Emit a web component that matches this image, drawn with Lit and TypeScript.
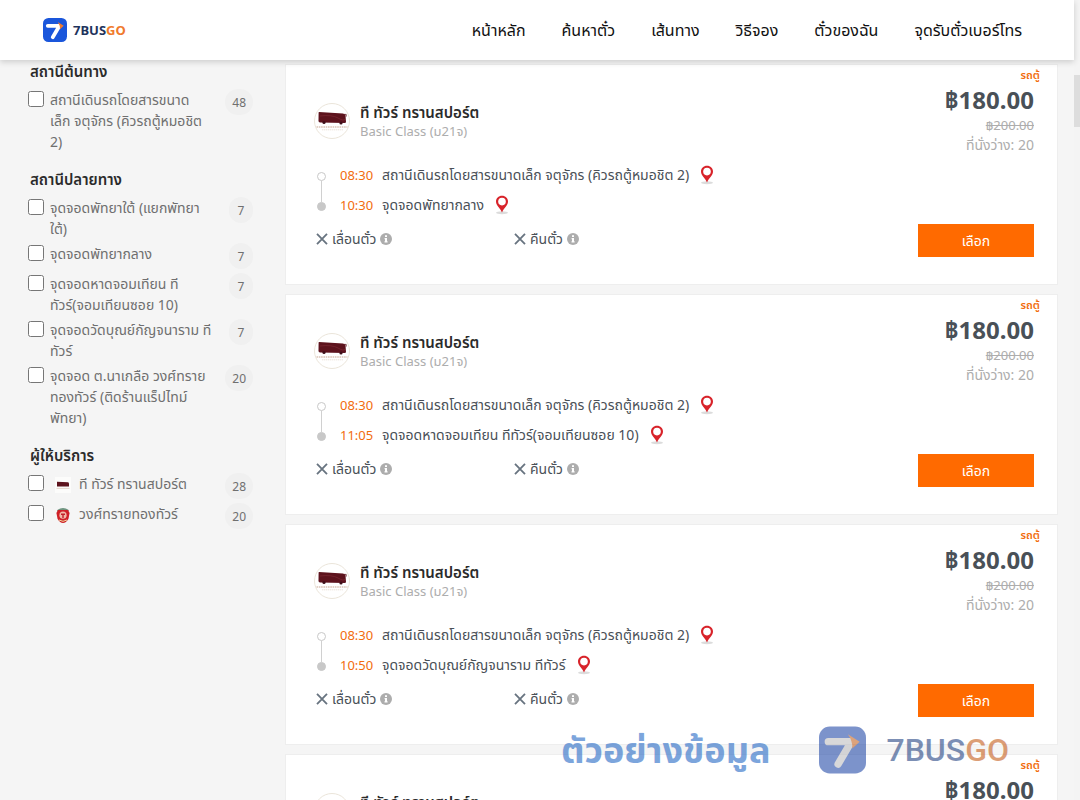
import { LitElement, html, css, svg, nothing } from "lit";
import { customElement, property } from "lit/decorators.js";

interface Option {
  label: string;
  count: number;
  logo?: "bus" | "crest";
}
interface Group {
  title: string;
  options: Option[];
}
interface Trip {
  depart: string;
  arrive: string;
  to: string;
}

const NAV = ["หน้าหลัก", "ค้นหาตั๋ว", "เส้นทาง", "วิธีจอง", "ตั๋วของฉัน", "จุดรับตั๋วเบอร์โทร"];

const GROUPS: Group[] = [
  {
    title: "สถานีต้นทาง",
    options: [{ label: "สถานีเดินรถโดยสารขนาด\nเล็ก จตุจักร (คิวรถตู้หมอชิต\n2)", count: 48 }],
  },
  {
    title: "สถานีปลายทาง",
    options: [
      { label: "จุดจอดพัทยาใต้ (แยกพัทยา\nใต้)", count: 7 },
      { label: "จุดจอดพัทยากลาง", count: 7 },
      { label: "จุดจอดหาดจอมเทียน ที\nทัวร์(จอมเทียนซอย 10)", count: 7 },
      { label: "จุดจอดวัดบุณย์กัญจนาราม ที\nทัวร์", count: 7 },
      { label: "จุดจอด ต.นาเกลือ วงศ์ทราย\nทองทัวร์ (ติดร้านแร็ปไทม์\nพัทยา)", count: 20 },
    ],
  },
  {
    title: "ผู้ให้บริการ",
    options: [
      { label: "ที ทัวร์ ทรานสปอร์ต", count: 28, logo: "bus" },
      { label: "วงศ์ทรายทองทัวร์", count: 20, logo: "crest" },
    ],
  },
];

const TRIPS: Trip[] = [
  { depart: "08:30", arrive: "10:30", to: "จุดจอดพัทยากลาง" },
  { depart: "08:30", arrive: "11:05", to: "จุดจอดหาดจอมเทียน ทีทัวร์(จอมเทียนซอย 10)" },
  { depart: "08:30", arrive: "10:50", to: "จุดจอดวัดบุณย์กัญจนาราม ทีทัวร์" },
  { depart: "08:30", arrive: "10:30", to: "จุดจอดพัทยากลาง" },
];

const busShape = svg`
  <path d="M5 13 L29 14.5 Q31 14.8 31.5 16.5 L32 23 Q32 24 30.5 24 L6 23.4 Q4.5 23.2 4.5 22 L4.6 14 Q4.6 13 5 13Z" fill="#5d131d"/>
  <path d="M6 17 Q18 15.5 24 19 T31 20" fill="none" stroke="#7d2a34" stroke-width=".7"/>
  <path d="M30 15.4h2.2v2.2" fill="none" stroke="#5d131d" stroke-width=".8"/>
  <circle cx="10" cy="23.5" r="1.6" fill="#40101a"/>
  <circle cx="27" cy="24" r="1.6" fill="#40101a"/>
  <path d="M2.5 28h31" stroke="#dcc4b6" stroke-width="1.4" stroke-dasharray="1.6 .7"/>
  <path d="M8 30.8h21" stroke="#ece2d6" stroke-width="1" stroke-dasharray="1.4 .6"/>`;

const operatorLogo = html`<svg class="avatar" viewBox="0 0 36 38" aria-hidden="true">
  <circle cx="18" cy="19" r="17.500" fill="#fff" stroke="#ebe5da" stroke-width="1"/>
  <g transform="translate(0 -3)">${busShape}</g>
</svg>`;

const smallBus = html`<svg class="mini" viewBox="0 0 16 16" aria-hidden="true">
  <rect width="16" height="16" fill="#fcfcfb"/>
  <path d="M2 4.8 13 5.2Q14 5.4 14 7V9.5H2Z" fill="#5d131d"/>
  <path d="M1.5 11.4h13" stroke="#e6d6cb" stroke-width="1"/>
</svg>`;

const smallCrest = html`<svg class="mini" viewBox="0 0 16 16" aria-hidden="true">
  <path d="M2 3.2Q8-1.4 14 3.2L13 5H3Z" fill="#6f9480"/>
  <path d="M3 3h10l1.6 3-1.2 6Q11 15.8 8 16 5 15.8 2.6 12L1.4 6Z" fill="#cf2027"/>
  <circle cx="8" cy="8.2" r="3.6" fill="#f2b9a8"/>
  <path d="M6 6.500h4v1.400H6zM7.300 8h1.400v3H7.300z" fill="#c2222b"/>
  <path d="M4 13q4 2.600 8 0" fill="none" stroke="#f0d9a0" stroke-width="1"/>
</svg>`;

const mark = (cls: string, tile: string, digit: string, tip: string) => html`<svg class=${cls} viewBox="0 0 48 48" aria-hidden="true">
  <rect width="48" height="48" rx="11" fill=${tile}/>
  <path d="M9.500 15.500H33L19.500 38.500" fill="none" stroke=${digit} stroke-width="7.500" stroke-linecap="round" stroke-linejoin="round"/>
  <path d="M29.500 8 41.500 15.500 34 22.500Q34.500 15 29.500 8Z" fill=${tip}/>
</svg>`;

const pin = html`<svg class="pin" viewBox="0 0 14 20" aria-hidden="true">
  <ellipse cx="7" cy="17.800" rx="6" ry="1.500" fill="#dcdcdc"/>
  <path d="M7 .8C3.500.8 1 3.300 1 6.600 1 10.500 5 12.800 7 17.500 9 12.800 13 10.500 13 6.600 13 3.300 10.500.8 7 .8Z" fill="#d8232a"/>
  <circle cx="7" cy="6.600" r="3.800" fill="#fff"/>
</svg>`;

const cross = html`<svg class="cross" viewBox="0 0 12 12" aria-hidden="true">
  <path d="M1 .8 11 11.200M11 .8 1 11.200" stroke="#687480" stroke-width="1.800" fill="none"/>
</svg>`;

const info = html`<svg class="info" viewBox="0 0 12 12" aria-hidden="true">
  <circle cx="6" cy="6" r="6" fill="#adadad"/>
  <path d="M5 2.300h2v1.700H5zM4.600 5H7v3.300h.6v1.200H4.500V8.300H5V6.200h-.4z" fill="#fff"/>
</svg>`;

@customElement("filter-panel")
export class FilterPanel extends LitElement {
  static styles = css`
    :host { display: block; color: #6f6f6f; font-size: 14px; line-height: 21px; }
    .title { margin: 0 0 7px 2px; font-size: 15px; line-height: 21px; font-weight: 600; color: #2b2b2b; }
    .group { margin: 0 0 17px; padding: 0; list-style: none; }
    .option { display: flex; align-items: flex-start; justify-content: space-between; min-height: 26px; margin-bottom: 4px; }
    .label { display: flex; align-items: flex-start; gap: 6px; }
    .text { white-space: pre-line; }
    .box { flex: none; width: 16px; height: 16px; margin: 2px 0 0; }
    .mini { flex: none; width: 16px; height: 16px; margin: 4px 2px 0 5px; }
    .count { display: flex; justify-content: center; align-items: center; box-sizing: border-box; height: 26px; min-width: 24px; padding: 0 7px; border-radius: 13px; background: #f0f0f0; font-size: 12px; }
  `;
  render() {
    return GROUPS.map(
      (g, gi) => html`<h2 class="title">${g.title}</h2>
        <ul class="group">
          ${g.options.map(
            (o, i) => html`<li class="option">
              <label class="label" for="f${gi}-${i}">
                <input class="box" type="checkbox" id="f${gi}-${i}" />
                ${o.logo === "bus" ? smallBus : o.logo === "crest" ? smallCrest : nothing}
                <span class="text">${o.label}</span>
              </label>
              <span class="count">${o.count}</span>
            </li>`
          )}
        </ul>`
    );
  }
}

@customElement("trip-card")
export class TripCard extends LitElement {
  @property({ attribute: false }) trip!: Trip;
  static styles = css`
    :host { display: flex; justify-content: space-between; box-sizing: border-box; min-height: 221px; padding: 0 23px 24px 30px; background: #fff; border: 1px solid #eee; color: #495057; font-size: 14px; line-height: 20px; }
    .main { flex: 1; padding-top: 37px; }
    .operator { display: flex; align-items: center; gap: 10px; }
    .avatar { width: 36px; height: 38px; margin-left: -2px; }
    .name { margin: 0; font-size: 15px; line-height: 19px; font-weight: 600; color: #2b2b2b; }
    .class { margin: 0; font-size: 13px; line-height: 18px; color: #adadad; }
    .route { margin: 20px 0 0; padding: 0; list-style: none; }
    .stop { display: flex; align-items: center; height: 30px; }
    .dot { display: flex; flex-direction: column; align-items: center; width: 11px; height: 30px; margin-right: 13px; }
    .dot::before { content: ""; box-sizing: border-box; flex: none; width: 9px; height: 9px; margin-top: 12px; border: 1px solid #c8c8c8; border-radius: 50%; }
    .dot::after { content: ""; width: 1px; flex: none; height: 21px; background: #d0d0d0; }
    .end::before { background: #c8c8c8; }
    .end::after { content: none; }
    .time { width: 42px; font-size: 13px; color: #f26c0d; }
    .pin { width: 14px; height: 20px; margin-left: 11px; }
    .policy { display: grid; grid-template-columns: 198px 198px; margin-top: 9px; }
    .rule { display: flex; align-items: center; gap: 4px; }
    .cross { width: 12px; height: 12px; }
    .info { width: 12px; height: 12px; }
    .side { display: flex; flex-direction: column; align-items: flex-end; }
    .kind { margin: 0 -6px 0 0; font-size: 11px; line-height: 19px; font-weight: 600; color: #f26c0d; }
    .price { font-size: 24px; line-height: 32px; font-weight: 700; }
    .old { font-size: 13px; line-height: 18px; color: #adadad; }
    .seats { line-height: 22px; color: #adadad; }
    .pick { width: 116px; height: 33px; margin-top: 68px; padding: 0; border: 0; background: #ff6a00; color: #fff; font: inherit; cursor: pointer; }
  `;
  render() {
    const t = this.trip;
    return html`<div class="main">
        <div class="operator">
          ${operatorLogo}
          <div>
            <h3 class="name">ที ทัวร์ ทรานสปอร์ต</h3>
            <p class="class">Basic Class (ม21จ)</p>
          </div>
        </div>
        <ol class="route">
          <li class="stop"><span class="dot"></span><span class="time">${t.depart}</span><span>สถานีเดินรถโดยสารขนาดเล็ก จตุจักร (คิวรถตู้หมอชิต 2)</span>${pin}</li>
          <li class="stop"><span class="dot end"></span><span class="time">${t.arrive}</span><span>${t.to}</span>${pin}</li>
        </ol>
        <div class="policy">
          <span class="rule">${cross}<span>เลื่อนตั๋ว</span>${info}</span>
          <span class="rule">${cross}<span>คืนตั๋ว</span>${info}</span>
        </div>
      </div>
      <div class="side">
        <span class="kind">รถตู้</span>
        <span class="price">฿180.00</span>
        <s class="old">฿200.00</s>
        <span class="seats">ที่นั่งว่าง: 20</span>
        <button class="pick" type="button">เลือก</button>
      </div>`;
  }
}

@customElement("app-root")
export class AppRoot extends LitElement {
  static styles = css`
    :host { display: flex; height: 100vh; overflow: hidden; background: #f5f5f5; font-family: "Noto Sans", "Noto Sans Thai", sans-serif; }
    .page { flex: 1; min-width: 0; display: flex; flex-direction: column; }
    .header { position: relative; z-index: 1; flex: none; display: flex; align-items: center; justify-content: space-between; height: 60px; padding: 0 52px 0 43px; background: #fff; box-shadow: 0 2px 6px rgba(0, 0, 0, 0.17); }
    .brand { display: flex; align-items: center; gap: 6px; font-size: 13px; line-height: 20px; font-weight: 700; color: #1e335c; text-decoration: none; }
    .mark { width: 24px; height: 24px; }
    .go { color: #f07a2d; }
    .nav { display: flex; gap: 36px; }
    .link { color: #111; font-size: 16px; line-height: 24px; text-decoration: none; }
    .body { flex: 1; min-height: 0; display: flex; gap: 32px; padding: 0 16px 0 28px; }
    .filters { flex: 0 0 225px; padding-top: 1px; }
    .results { flex: 1; display: flex; flex-direction: column; gap: 9px; padding-top: 4px; }
    .track { flex: none; width: 6px; background: #f4f4f4; }
    .thumb { height: 52px; margin-top: 75px; background: #ddd; }
    .sample { position: absolute; right: 71px; bottom: 24px; display: flex; align-items: center; opacity: 0.58; pointer-events: none; }
    .note { margin-right: 49px; font-size: 36px; line-height: 52px; font-weight: 700; color: #1f65c4; }
    .big { width: 47px; height: 48px; margin-right: 20px; }
    .word { font-family: Roboto, sans-serif; font-size: 32px; line-height: 48px; font-weight: 500; color: #1e3f80; }
    .word .go { color: #c45a14; }
  `;
  render() {
    return html`<div class="page">
        <header class="header">
          <a class="brand" href="#">${mark("mark", "#1a56db", "#fff", "#f07a2d")}<span>7BUS<span class="go">GO</span></span></a>
          <nav class="nav">${NAV.map((n) => html`<a class="link" href="#">${n}</a>`)}</nav>
        </header>
        <div class="body">
          <aside class="filters"><filter-panel></filter-panel></aside>
          <main class="results">${TRIPS.map((t) => html`<trip-card .trip=${t}></trip-card>`)}</main>
        </div>
      </div>
      <div class="track"><div class="thumb"></div></div>
      <div class="sample">
        <span class="note">ตัวอย่างข้อมูล</span>${mark("big", "#1f47a7", "#bcbcbf", "#c4611f")}<span class="word">7BUS<span class="go">GO</span></span>
      </div>`;
  }
}
